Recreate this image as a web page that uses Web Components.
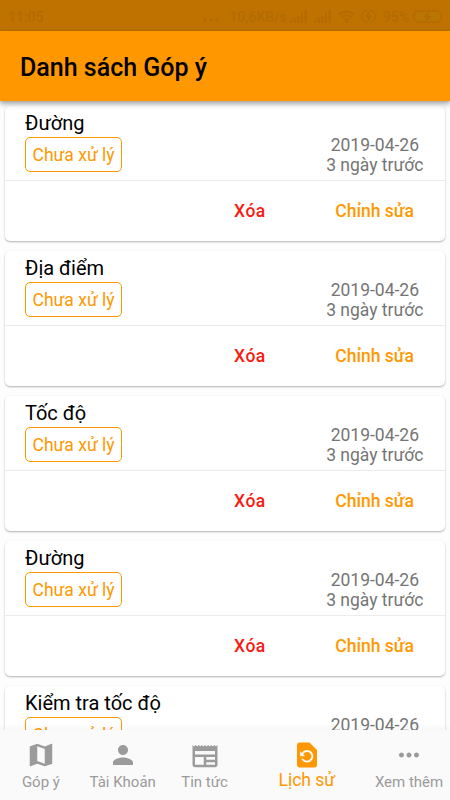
<!DOCTYPE html>
<!--
Feedback list. index.html
Status bar, app bar, a list of cards and a bottom navigation,
each one a custom element with its own shadow root.
-->
<html lang="vi">
<head>
  <meta charset="utf-8">
  <title>Danh sách Góp ý</title>
  <style>
    body {
      margin: 0;
      height: 800px;
      overflow: hidden;
      font-family: Roboto, "Noto Sans", sans-serif;
      background: #fdfdfd;
    }
  </style>
</head>
<body>
<feedback-app>
  <status-bar slot="status"></status-bar>
  <app-bar slot="bar">Danh sách Góp ý</app-bar>
  <feedback-card date="2019-04-26" ago="3 ngày trước">Đường</feedback-card>
  <feedback-card date="2019-04-26" ago="3 ngày trước">Địa điểm</feedback-card>
  <feedback-card date="2019-04-26" ago="3 ngày trước">Tốc độ</feedback-card>
  <feedback-card date="2019-04-26" ago="3 ngày trước">Đường</feedback-card>
  <feedback-card date="2019-04-26" ago="3 ngày trước">Kiểm tra tốc độ</feedback-card>
  <bottom-nav slot="nav">
    <nav-item icon="map">Góp ý</nav-item>
    <nav-item icon="person">Tài Khoản</nav-item>
    <nav-item icon="news">Tin tức</nav-item>
    <nav-item icon="restore" active>Lịch sử</nav-item>
    <nav-item icon="more">Xem thêm</nav-item>
  </bottom-nav>
</feedback-app>

<script>
// Attach an open root to the element and fill it.
function render(el, html) {
  el.attachShadow({mode: 'open'}).innerHTML = html;
}

customElements.define('feedback-app', class extends HTMLElement {
  constructor() {
    super();
    render(this, `
  <style>
:host {
  display: flex;
  flex-direction: column;
  height: 800px;
}
main {
  flex: 1;
  min-height: 0;
  overflow: hidden;
  padding-top: 5px;
}
  </style>
  <slot name="status"></slot>
  <slot name="bar"></slot>
  <main><slot></slot></main>
  <slot name="nav"></slot>
`);
  }
});

customElements.define('status-bar', class extends HTMLElement {
  constructor() {
    super();
    render(this, `
  <style>
:host {
  display: flex;
  align-items: center;
  box-sizing: border-box;
  height: 31px;
  padding: 2px 8px 0 8px;
  background: #bf7200;
  color: #b36b00;
  font-size: 14px;
  font-weight: 500;
}
.time { flex: 1; }
svg { display: block; fill: currentColor; }
.dots { margin: 6px 10px 0 0; }
.signal { margin-left: 3px; }
.signal + .signal { margin-left: 7px; }
.wifi { margin-left: 7px; }
.charge { margin: 0 7px 0 6px; }
.battery { margin-left: 4px; }
  </style>
  <span class="time">11:05</span>
  <svg class="dots" width="16" height="4"><circle cx="2" cy="2" r="1.6"/><circle cx="8" cy="2" r="1.6"/><circle cx="14" cy="2" r="1.6"/></svg>
  <span>10,6KB/s</span>
  <svg class="signal" width="17" height="13"><path d="M0 10h2v3H0zM3.7 8h2v5h-2zM7.4 6h2v7h-2zM11 3h2v10h-2zM14.8 0h2v13h-2z"/></svg>
  <svg class="signal" width="17" height="13"><path d="M0 10h2v3H0zM3.7 8h2v5h-2zM7.4 6h2v7h-2zM11 3h2v10h-2zM14.8 0h2v13h-2z"/></svg>
  <svg class="wifi" width="17" height="14" viewBox="0 0 17 14"><g fill="none" stroke="currentColor" stroke-width="1.8"><path d="M.7 4.8a11 11 0 0 1 15.6 0M3.3 7.6a7.4 7.4 0 0 1 10.4 0M5.8 10.2a3.9 3.9 0 0 1 5.4 0"/></g><path d="M8.5 13.5l-2-2a3 3 0 0 1 4 0z"/></svg>
  <svg class="charge" width="15" height="15" viewBox="0 0 15 15"><path fill="none" stroke="currentColor" stroke-width="1.5" d="M6 1.2a6.4 6.4 0 0 0 0 12.6M9 1.2a6.4 6.4 0 0 1 0 12.6"/><path d="M8.5 1L4 8.3h3L6.4 14 11 6.6H8z"/></svg>
  <span>95%</span>
  <svg class="battery" width="29" height="13" viewBox="0 0 29 13"><rect x=".7" y=".7" width="27.6" height="11.6" rx="5" fill="none" stroke="currentColor" stroke-width="1.4"/><rect x="2.5" y="2.3" width="24" height="8.4" rx="3.6" fill="#b97600"/><path d="M16.5 1.5L10 7.2h3.6l-1.3 4.6L19 6h-4z"/></svg>
`);
  }
});

customElements.define('app-bar', class extends HTMLElement {
  constructor() {
    super();
    render(this, `
  <style>
:host {
  display: flex;
  align-items: center;
  position: relative;
  z-index: 1;
  box-sizing: border-box;
  height: 70px;
  padding: 2px 20px 0;
  background: #ff9800;
  color: #000;
  font-size: 25px;
  font-weight: 500;
  box-shadow: 0 2px 5px rgba(0, 0, 0, .34), 0 5px 6px rgba(0, 0, 0, .08);
}
  </style>
  <slot></slot>
`);
  }
});

customElements.define('feedback-card', class extends HTMLElement {
  constructor() {
    super();
    render(this, `
  <style>
:host {
  display: flex;
  flex-direction: column;
  height: 135px;
  margin: 0 5px 10px;
  border-radius: 5px;
  background: #fff;
  box-shadow: 0 1px 2px rgba(0, 0, 0, .3);
}
.info {
  display: flex;
  justify-content: space-between;
  box-sizing: border-box;
  height: 75px;
  padding: 5px 21.5px 0 20px;
  border-bottom: 1px solid #ebebeb;
}
.title {
  font-size: 20px;
  line-height: 24px;
  color: #000;
}
.chip {
  display: inline-block;
  box-sizing: border-box;
  height: 35px;
  margin-top: 2px;
  padding: 0 6.5px;
  border: 1px solid #ff9800;
  border-radius: 5px;
  color: #ff9800;
  font-size: 17.5px;
  line-height: 34px;
}
.when {
  padding-top: 24px;
  color: #757575;
  font-size: 17.5px;
  line-height: 20px;
  text-align: center;
}
.actions {
  display: flex;
  flex: 1;
  align-items: center;
  justify-content: flex-end;
  gap: 69.5px;
  padding-right: 31px;
  font-size: 17.5px;
  font-weight: 500;
  color: #ff9800;
}
.delete {
  color: #f91b12;
  letter-spacing: .5px;
}
  </style>
  <div class="info">
    <div>
      <div class="title"><slot></slot></div>
      <span class="chip">Chưa xử lý</span>
    </div>
    <div class="when">
      <div>${this.getAttribute('date')}</div>
      <div>${this.getAttribute('ago')}</div>
    </div>
  </div>
  <div class="actions">
    <span class="delete">Xóa</span>
    <span>Chỉnh sửa</span>
  </div>
`);
  }
});

customElements.define('bottom-nav', class extends HTMLElement {
  constructor() {
    super();
    render(this, `
  <style>
:host {
  display: flex;
  position: relative;
  z-index: 1;
  height: 70px;
  background: #fafafa;
  box-shadow: 0 -1px 8px rgba(0, 0, 0, .06);
}
  </style>
  <slot></slot>
`);
  }
});

// Paths on a 24 x 24 grid
const icons = {
  map: 'M20.5 3l-.16.03L15 5.1 9 3 3.36 4.9c-.21.07-.36.25-.36.48V20.5c0 .28.22.5.5.5l.16-.03L9 18.9l6 2.1 5.64-1.9c.21-.07.36-.25.36-.48V3.5c0-.28-.22-.5-.5-.5zM15 19l-6-2.11V5l6 2.11V19z',
  person: 'M12 12c2.21 0 4-1.79 4-4s-1.79-4-4-4-4 1.79-4 4 1.79 4 4 4zm0 2c-2.67 0-8 1.34-8 4v2h16v-2c0-2.66-5.33-4-8-4z',
  news: 'M22 4l-1.25 1.25L19.5 4l-1.25 1.25L17 4l-1.25 1.25L14.5 4l-1.25 1.25L12 4l-1.25 1.25L9.5 4 8.25 5.25 7 4 5.75 5.25 4.5 4 3.25 5.25 2 4v15.8c0 1.1.9 2 2 2h16c1.1 0 2-.9 2-2V4zM11 19.8H4v-6.2h7v6.2zm9 0h-7v-2.1h7v2.1zm0-4.1h-7v-2.1h7v2.1zm0-4.1H4V8.7h16v2.9z',
  restore: 'M14 2H6c-1.1 0-1.99.9-1.99 2L4 20c0 1.1.89 2 1.99 2H18c1.1 0 2-.9 2-2V8l-6-6zm-2 16c-2.05 0-3.81-1.24-4.58-3h1.71c.63.9 1.68 1.5 2.87 1.5 1.93 0 3.5-1.57 3.5-3.5S13.93 9.5 12 9.5c-1.35 0-2.52.78-3.1 1.9l1.6 1.6h-4V9l1.3 1.3C8.69 8.92 10.23 8 12 8c2.76 0 5 2.24 5 5s-2.24 5-5 5z',
  more: 'M6 10c-1.1 0-2 .9-2 2s.9 2 2 2 2-.9 2-2-.9-2-2-2zm12 0c-1.1 0-2 .9-2 2s.9 2 2 2 2-.9 2-2-.9-2-2-2zm-6 0c-1.1 0-2 .9-2 2s.9 2 2 2 2-.9 2-2-.9-2-2-2z'
};

customElements.define('nav-item', class extends HTMLElement {
  constructor() {
    super();
    render(this, `
  <style>
:host {
  display: flex;
  flex: 1 1 0;
  min-width: 0;
  flex-direction: column;
  align-items: center;
  padding-top: 10px;
  color: #9b9b9b;
  font-size: 15px;
  line-height: 24px;
  white-space: nowrap;
}
:host([active]) {
  flex-grow: 1.5;
  color: #ff9800;
  font-size: 17.5px;
  line-height: 20px;
}
svg {
  flex: none;
  fill: currentColor;
}
  </style>
  <svg width="30" height="30" viewBox="0 0 24 24"><path d="${icons[this.getAttribute('icon')]}"/></svg>
  <span><slot></slot></span>
`);
  }
});
</script>
</body>
</html>
